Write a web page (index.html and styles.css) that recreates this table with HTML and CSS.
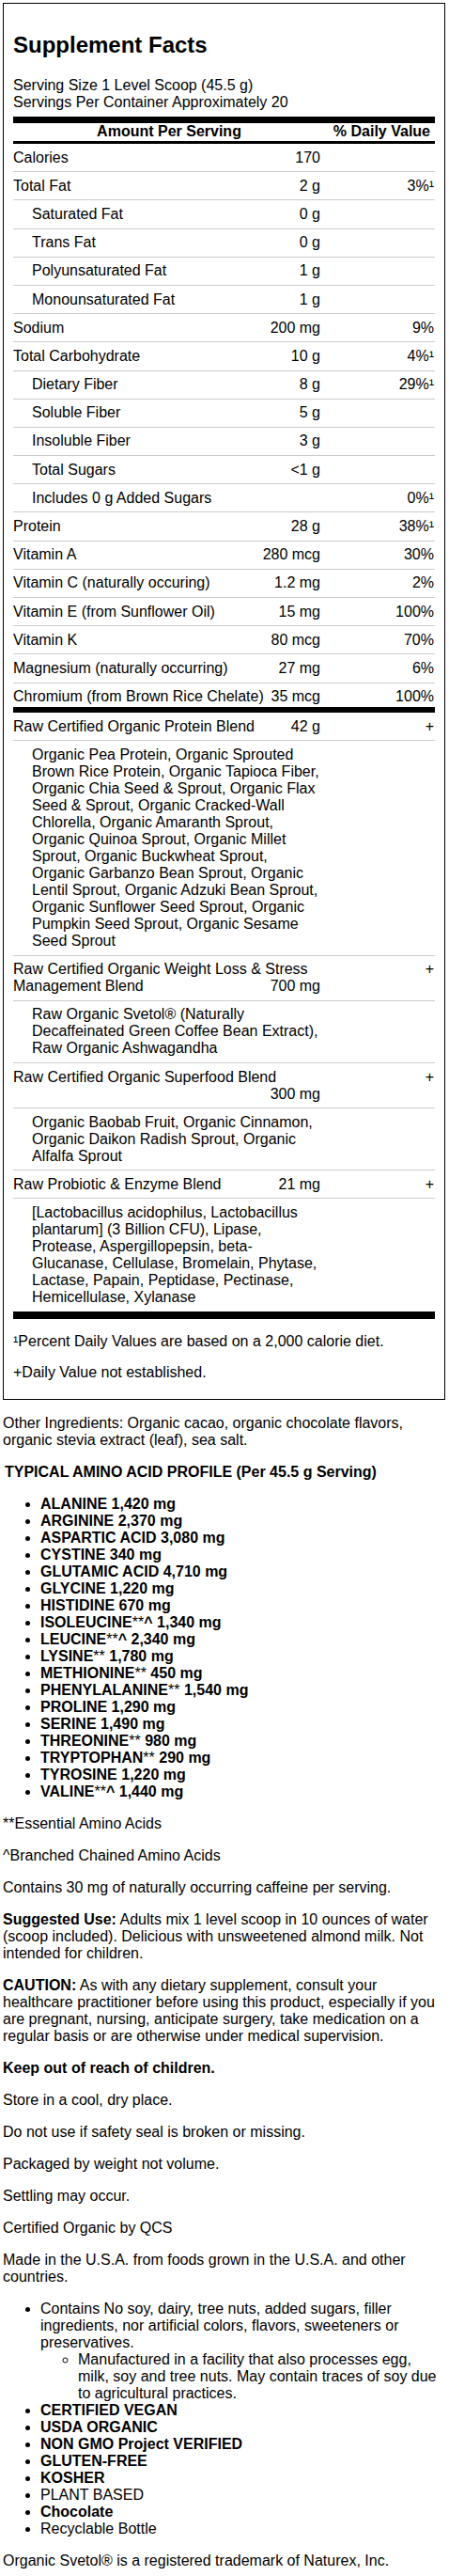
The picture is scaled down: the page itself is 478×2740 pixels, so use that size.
FILE: index.html
```html
<!DOCTYPE html>
<html lang="en">
<head>
<meta charset="utf-8">
<title>Supplement Facts</title>
<link rel="stylesheet" href="styles.css">
</head>
<body>
<div class="page">
  <div class="facts">
    <h2 class="facts-title">Supplement Facts</h2>
    <div class="serving">Serving Size 1 Level Scoop (45.5 g)<br>Servings Per Container Approximately 20</div>
    <table class="sf">
      <colgroup><col class="c-name"><col class="c-dv"></colgroup>
      <thead>
        <tr><th class="h-amt">Amount Per Serving</th><th class="h-dv">% Daily Value</th></tr>
      </thead>
      <tbody>
        <tr><td class="nm">Calories<span class="amt">170</span></td><td class="dv"></td></tr>
        <tr><td class="nm">Total Fat<span class="amt">2 g</span></td><td class="dv">3%¹</td></tr>
        <tr><td class="nm ind">Saturated Fat<span class="amt">0 g</span></td><td class="dv"></td></tr>
        <tr><td class="nm ind">Trans Fat<span class="amt">0 g</span></td><td class="dv"></td></tr>
        <tr><td class="nm ind">Polyunsaturated Fat<span class="amt">1 g</span></td><td class="dv"></td></tr>
        <tr><td class="nm ind">Monounsaturated Fat<span class="amt">1 g</span></td><td class="dv"></td></tr>
        <tr><td class="nm">Sodium<span class="amt">200 mg</span></td><td class="dv">9%</td></tr>
        <tr><td class="nm">Total Carbohydrate<span class="amt">10 g</span></td><td class="dv">4%¹</td></tr>
        <tr><td class="nm ind">Dietary Fiber<span class="amt">8 g</span></td><td class="dv">29%¹</td></tr>
        <tr><td class="nm ind">Soluble Fiber<span class="amt">5 g</span></td><td class="dv"></td></tr>
        <tr><td class="nm ind">Insoluble Fiber<span class="amt">3 g</span></td><td class="dv"></td></tr>
        <tr><td class="nm ind">Total Sugars<span class="amt">&lt;1 g</span></td><td class="dv"></td></tr>
        <tr><td class="nm ind">Includes 0 g Added Sugars</td><td class="dv">0%¹</td></tr>
        <tr><td class="nm">Protein<span class="amt">28 g</span></td><td class="dv">38%¹</td></tr>
        <tr><td class="nm">Vitamin A<span class="amt">280 mcg</span></td><td class="dv">30%</td></tr>
        <tr><td class="nm">Vitamin C (naturally occuring)<span class="amt">1.2 mg</span></td><td class="dv">2%</td></tr>
        <tr><td class="nm">Vitamin E (from Sunflower Oil)<span class="amt">15 mg</span></td><td class="dv">100%</td></tr>
        <tr><td class="nm">Vitamin K<span class="amt">80 mcg</span></td><td class="dv">70%</td></tr>
        <tr><td class="nm">Magnesium (naturally occurring)<span class="amt">27 mg</span></td><td class="dv">6%</td></tr>
        <tr class="sect-end"><td class="nm">Chromium (from Brown Rice Chelate)<span class="amt">35 mcg</span></td><td class="dv">100%</td></tr>
        <tr><td class="nm">Raw Certified Organic Protein Blend<span class="amt">42 g</span></td><td class="dv">+</td></tr>
        <tr><td class="nm ingr">Organic Pea Protein, Organic Sprouted Brown Rice Protein, Organic Tapioca Fiber, Organic Chia Seed &amp; Sprout, Organic Flax Seed &amp; Sprout, Organic Cracked-Wall Chlorella, Organic Amaranth Sprout, Organic Quinoa Sprout, Organic Millet Sprout, Organic Buckwheat Sprout, Organic Garbanzo Bean Sprout, Organic Lentil Sprout, Organic Adzuki Bean Sprout, Organic Sunflower Seed Sprout, Organic Pumpkin Seed Sprout, Organic Sesame Seed Sprout</td><td class="dv"></td></tr>
        <tr><td class="nm">Raw Certified Organic Weight Loss &amp; Stress Management Blend<span class="amt">700 mg</span></td><td class="dv">+</td></tr>
        <tr><td class="nm ingr">Raw Organic Svetol® (Naturally Decaffeinated Green Coffee Bean Extract), Raw Organic Ashwagandha</td><td class="dv"></td></tr>
        <tr><td class="nm">Raw Certified Organic Superfood Blend<span class="amt">300 mg</span></td><td class="dv">+</td></tr>
        <tr><td class="nm ingr">Organic Baobab Fruit, Organic Cinnamon, Organic Daikon Radish Sprout, Organic Alfalfa Sprout</td><td class="dv"></td></tr>
        <tr><td class="nm">Raw Probiotic &amp; Enzyme Blend<span class="amt">21 mg</span></td><td class="dv">+</td></tr>
        <tr class="table-end"><td class="nm ingr">[Lactobacillus acidophilus, Lactobacillus plantarum] (3 Billion CFU), Lipase, Protease, Aspergillopepsin, beta-Glucanase, Cellulase, Bromelain, Phytase, Lactase, Papain, Peptidase, Pectinase, Hemicellulase, Xylanase</td><td class="dv"></td></tr>
      </tbody>
    </table>
    <p class="foot">¹Percent Daily Values are based on a 2,000 calorie diet.</p>
    <p class="foot">+Daily Value not established.</p>
  </div>

  <div class="notes">
    <p>Other Ingredients: Organic cacao, organic chocolate flavors, organic stevia extract (leaf), sea salt.</p>
    <h3 class="profile">TYPICAL AMINO ACID PROFILE (Per 45.5 g Serving)</h3>
    <ul class="amino">
      <li>ALANINE 1,420 mg</li>
      <li>ARGININE 2,370 mg</li>
      <li>ASPARTIC ACID 3,080 mg</li>
      <li>CYSTINE 340 mg</li>
      <li>GLUTAMIC ACID 4,710 mg</li>
      <li>GLYCINE 1,220 mg</li>
      <li>HISTIDINE 670 mg</li>
      <li>ISOLEUCINE<span class="mark">**</span>^ 1,340 mg</li>
      <li>LEUCINE<span class="mark">**</span>^ 2,340 mg</li>
      <li>LYSINE<span class="mark">**</span> 1,780 mg</li>
      <li>METHIONINE<span class="mark">**</span> 450 mg</li>
      <li>PHENYLALANINE<span class="mark">**</span> 1,540 mg</li>
      <li>PROLINE 1,290 mg</li>
      <li>SERINE 1,490 mg</li>
      <li>THREONINE<span class="mark">**</span> 980 mg</li>
      <li>TRYPTOPHAN<span class="mark">**</span> 290 mg</li>
      <li>TYROSINE 1,220 mg</li>
      <li>VALINE<span class="mark">**</span>^ 1,440 mg</li>
    </ul>
    <p>**Essential Amino Acids</p>
    <p>^Branched Chained Amino Acids</p>
    <p>Contains 30 mg of naturally occurring caffeine per serving.</p>
    <p><strong>Suggested Use:</strong> Adults mix 1 level scoop in 10 ounces of water (scoop included). Delicious with unsweetened almond milk. Not intended for children.</p>
    <p><strong>CAUTION:</strong> As with any dietary supplement, consult your healthcare practitioner before using this product, especially if you are pregnant, nursing, anticipate surgery, take medication on a regular basis or are otherwise under medical supervision.</p>
    <p><strong>Keep out of reach of children.</strong></p>
    <p>Store in a cool, dry place.</p>
    <p>Do not use if safety seal is broken or missing.</p>
    <p>Packaged by weight not volume.</p>
    <p>Settling may occur.</p>
    <p>Certified Organic by QCS</p>
    <p>Made in the U.S.A. from foods grown in the U.S.A. and other countries.</p>
    <ul class="claims">
      <li>Contains No soy, dairy, tree nuts, added sugars, filler ingredients, nor artificial colors, flavors, sweeteners or preservatives.
        <ul class="sub">
          <li>Manufactured in a facility that also processes egg, milk, soy and tree nuts. May contain traces of soy due to agricultural practices.</li>
        </ul>
      </li>
      <li><strong>CERTIFIED VEGAN</strong></li>
      <li><strong>USDA ORGANIC</strong></li>
      <li><strong>NON GMO Project VERIFIED</strong></li>
      <li><strong>GLUTEN-FREE</strong></li>
      <li><strong>KOSHER</strong></li>
      <li>PLANT BASED</li>
      <li><strong>Chocolate</strong></li>
      <li>Recyclable Bottle</li>
    </ul>
    <p>Organic Svetol® is a registered trademark of Naturex, Inc.</p>
  </div>
</div>
</body>
</html>
```
FILE: styles.css
```css
* {
  box-sizing: border-box;
}

html, body {
  background: #ffffff;
}

body {
  margin: 0;
  font-family: "Liberation Sans", Arial, sans-serif;
  font-size: 16px;
  line-height: 18px;
  color: #000000;
}

.page {
  width: 471px;
  margin: 3px 0 0 3px;
}

/* ---------- Supplement facts box ---------- */
.facts {
  border: 1px solid #000000;
  padding: 10px 10px 4px;
}

.facts-title {
  font-size: 24px;
  line-height: normal;
  font-weight: bold;
  margin: 20px 0;
}

.serving {
  margin: 0 0 6px;
}

.sf {
  width: 100%;
  table-layout: fixed;
  border-collapse: separate;
  border-spacing: 0;
}

.c-name {
  width: 332px;
}

.c-dv {
  width: 117px;
}

.sf th {
  font-weight: bold;
  padding: 0 0 1px;
  border-top: 7px solid #000000;
  border-bottom: 3px solid #000000;
}

.h-amt {
  text-align: center;
}

.h-dv {
  text-align: right;
  padding-right: 5px !important;
}

.sf td {
  padding: 5.6px 0;
  border-bottom: 1px solid #cccccc;
  vertical-align: top;
}

.nm {
  padding-right: 5px !important;
}

.ind {
  padding-left: 20px !important;
}

.amt {
  float: right;
}

.dv {
  text-align: right;
  padding-right: 1px !important;
}

.ingr {
  padding-left: 20px !important;
}

.sect-end td {
  padding-bottom: 2px;
  border-bottom: 6px solid #000000;
}

.table-end td {
  border-bottom: 8px solid #000000;
}

.foot {
  margin: 15px 0;
}

/* ---------- Notes below ---------- */
.notes {
  padding-right: 8px;
}

.notes p {
  margin: 16px 0;
}

.profile {
  font-size: 16px;
  font-weight: bold;
  margin: 16px 0;
  padding-left: 2px;
}

.notes ul {
  margin: 16px 0;
  padding-left: 40px;
}

.amino li {
  font-weight: bold;
}

.mark {
  font-weight: normal;
}

.claims .sub {
  margin: 0;
  padding-left: 40px;
  list-style-type: circle;
}
```
